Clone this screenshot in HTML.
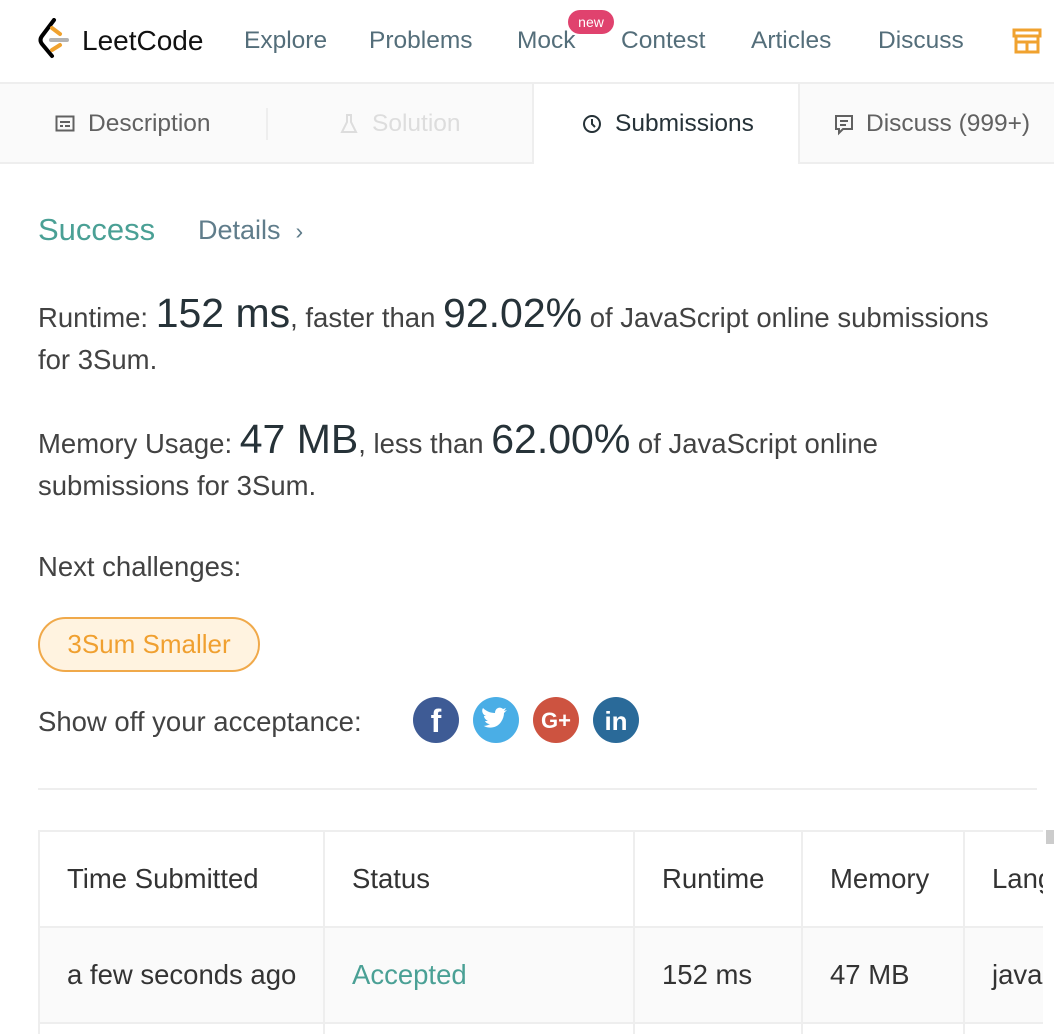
<!DOCTYPE html>
<html style="height:1034px;overflow:hidden"><head><meta charset="utf-8"><style>
*{margin:0;padding:0;box-sizing:border-box}
body{width:1054px;height:1034px;overflow:hidden;background:#fff;font-family:"Liberation Sans",sans-serif;position:relative;color:#424242}
.a{position:absolute;white-space:nowrap}
.nav{font-size:24.5px;color:#546e7a;top:27px}
.tab{font-size:24.5px;top:110px;color:#616161}
.t{font-size:27.5px;color:#424242}
.big{font-size:41px;color:#263238}
td{border:2px solid #eee;font-size:27.5px;color:#333;padding-left:27px;height:96px;overflow:hidden;white-space:nowrap}
</style></head><body>
<svg class="a" style="left:38px;top:18px" width="36" height="42" viewBox="0 0 36 42">
<path d="M16 2 L4 18 Q1 22 4 26 L14 38" stroke="#000" stroke-width="4" fill="none" stroke-linecap="round"/>
<path d="M14 10 L22 16 M14 32 L22 27" stroke="#f0a22f" stroke-width="4" fill="none" stroke-linecap="round"/>
<rect x="11" y="20" width="20" height="4" rx="2" fill="#b3b3b3"/>
</svg>
<div class="a" style="left:82px;top:25px;font-size:28px;color:#111">LeetCode</div>
<div class="a nav" style="left:244px">Explore</div>
<div class="a nav" style="left:369px">Problems</div>
<div class="a nav" style="left:517px">Mock</div>
<div class="a" style="left:568px;top:10px;width:46px;height:24px;border-radius:12px;background:#e0426e;color:#fff;font-size:14px;text-align:center;line-height:24px">new</div>
<div class="a nav" style="left:621px">Contest</div>
<div class="a nav" style="left:751px">Articles</div>
<div class="a nav" style="left:878px">Discuss</div>
<svg class="a" style="left:1012px;top:28px" width="30" height="26" viewBox="0 0 30 26"><path d="M2 2h26v6H2z M4 8v16h22V8 M4 14h22 M15 14v10" stroke="#f0a22f" stroke-width="3" fill="none"/></svg>
<div class="a" style="left:0;top:82px;width:1054px;height:2px;background:#eee"></div>
<div class="a" style="left:0;top:84px;width:534px;height:78px;background:#fafafa"></div>
<div class="a" style="left:798px;top:84px;width:256px;height:78px;background:#fafafa;border-left:2px solid #eee"></div>
<div class="a" style="left:0;top:162px;width:534px;height:2px;background:#eee"></div>
<div class="a" style="left:798px;top:162px;width:256px;height:2px;background:#eee"></div>
<div class="a" style="left:532px;top:84px;width:2px;height:78px;background:#eee"></div>
<div class="a" style="left:266px;top:108px;width:2px;height:32px;background:#eee"></div>
<svg class="a" style="left:55px;top:115px" width="20" height="18"><rect x="1.5" y="1.5" width="17" height="14" fill="none" stroke="#616161" stroke-width="2"/><path d="M5 7h10M5 11h3M10 11h5" stroke="#616161" stroke-width="2"/></svg>
<div class="a tab" style="left:88px">Description</div>
<svg class="a" style="left:340px;top:113px" width="18" height="22"><path d="M6 2h6M7 2v7L2 19h14L11 9V2" fill="none" stroke="#ddd" stroke-width="2"/></svg>
<div class="a tab" style="left:372px;color:#ddd">Solution</div>
<svg class="a" style="left:582px;top:114px" width="20" height="20"><circle cx="10" cy="10" r="8" fill="none" stroke="#263238" stroke-width="2"/><path d="M10 5v5l3 3" fill="none" stroke="#263238" stroke-width="2"/></svg>
<div class="a tab" style="left:615px;color:#263238">Submissions</div>
<svg class="a" style="left:834px;top:114px" width="20" height="22"><path d="M2 2h16v13H9l-4 4v-4H2z M6 7h8M6 11h6" fill="none" stroke="#616161" stroke-width="2"/></svg>
<div class="a tab" style="left:866px">Discuss (999+)</div>
<div class="a" style="left:38px;top:212px;font-size:31px;color:#4aa095">Success</div>
<div class="a" style="left:198px;top:215px;font-size:27px;color:#607d8b">Details &nbsp;<span style="font-size:23px">›</span></div>
<div class="a t" style="left:38px;top:292px;line-height:42px;white-space:normal;width:990px">Runtime: <span class="big">152 ms</span>, faster than <span class="big">92.02%</span> of JavaScript online submissions for 3Sum.</div>
<div class="a t" style="left:38px;top:418px;line-height:42px;white-space:normal;width:900px">Memory Usage: <span class="big">47 MB</span>, less than <span class="big">62.00%</span> of JavaScript online submissions for 3Sum.</div>
<div class="a t" style="left:38px;top:551px">Next challenges:</div>
<div class="a" style="left:38px;top:617px;width:222px;height:55px;border:2px solid #f0a94a;border-radius:28px;background:#fff3e0;color:#f0a030;font-size:26px;text-align:center;line-height:51px">3Sum Smaller</div>
<div class="a t" style="left:38px;top:706px">Show off your acceptance:</div>
<svg class="a" style="left:412px;top:696px" width="230" height="48">
<circle cx="24" cy="24" r="23" fill="#3e5b95"/><text x="24" y="36" font-size="32" font-weight="bold" fill="#fff" text-anchor="middle" font-family="Liberation Sans">f</text>
<circle cx="84" cy="24" r="23" fill="#4aaee6"/><path d="M72 30c5 3 13 2 17-4 2-3 3-6 3-9l3-3-3 1 2-3-3 1c-3-3-8-1-8 4-5 0-9-2-12-5-2 3 0 7 3 8h-2c0 2 2 4 4 5h-3c1 2 3 3 5 3-3 2-6 2-9 2z" fill="#fff"/>
<circle cx="144" cy="24" r="23" fill="#cd5340"/><text x="144" y="32" font-size="22" font-weight="bold" fill="#fff" text-anchor="middle" font-family="Liberation Sans">G+</text>
<circle cx="204" cy="24" r="23" fill="#2a6a99"/><text x="204" y="34" font-size="26" font-weight="bold" fill="#fff" text-anchor="middle" font-family="Liberation Sans">in</text>
</svg>
<div class="a" style="left:38px;top:788px;width:999px;height:2px;background:#eee"></div>
<div class="a" style="left:38px;top:830px;width:1005px;height:204px;overflow:hidden">
<table style="border-collapse:collapse;table-layout:fixed;width:1100px">
<colgroup><col style="width:285px"><col style="width:310px"><col style="width:168px"><col style="width:162px"><col style="width:175px"></colgroup>
<tr><td>Time Submitted</td><td>Status</td><td>Runtime</td><td>Memory</td><td>Language</td></tr>
<tr style="background:#fafafa"><td>a few seconds ago</td><td style="color:#4aa095">Accepted</td><td>152 ms</td><td>47 MB</td><td>javascript</td></tr>
<tr><td></td><td></td><td></td><td></td><td></td></tr>
</table>
</div>
<div class="a" style="left:1046px;top:830px;width:8px;height:14px;background:#ccc"></div>
</body></html>
